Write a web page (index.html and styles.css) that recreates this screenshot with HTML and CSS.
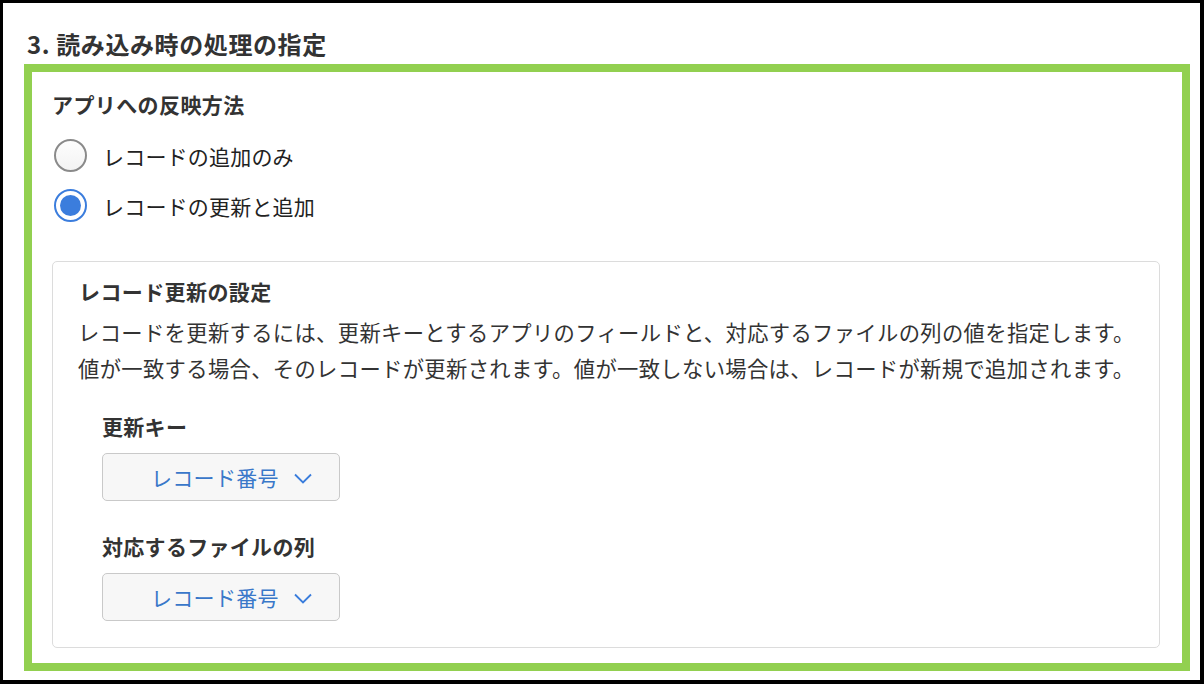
FILE: index.html
```html
<!DOCTYPE html>
<html lang="ja">
<head>
<meta charset="utf-8">
<link rel="stylesheet" href="styles.css">
</head>
<body>
<div class="frame">
  <h1 class="section-title">3. 読み込み時の処理の指定</h1>
  <div class="highlight">
    <h2 class="group-title">アプリへの反映方法</h2>
    <div class="radio-list">
      <label class="radio-row"><span class="radio"></span><span class="radio-label">レコードの追加のみ</span></label>
      <label class="radio-row"><span class="radio checked"></span><span class="radio-label">レコードの更新と追加</span></label>
    </div>
    <div class="panel">
      <h3 class="panel-title">レコード更新の設定</h3>
      <p class="panel-text">レコードを更新するには、更新キーとするアプリのフィールドと、対応するファイルの列の値を指定します。<br>値が一致する場合、そのレコードが更新されます。値が一致しない場合は、レコードが新規で追加されます。</p>
      <div class="field first">
        <div class="field-label">更新キー</div>
        <div class="select"><span class="select-text">レコード番号</span><svg class="chev" width="18" height="11" viewBox="0 0 18 11"><polyline points="1,1.5 9,9.5 17,1.5" fill="none" stroke="#3a7ddc" stroke-width="1.8"/></svg></div>
      </div>
      <div class="field second">
        <div class="field-label">対応するファイルの列</div>
        <div class="select"><span class="select-text">レコード番号</span><svg class="chev" width="18" height="11" viewBox="0 0 18 11"><polyline points="1,1.5 9,9.5 17,1.5" fill="none" stroke="#3a7ddc" stroke-width="1.8"/></svg></div>
      </div>
    </div>
  </div>
</div>
</body>
</html>
```

FILE: styles.css
```css
* { box-sizing: border-box; }
html, body { margin: 0; padding: 0; background: #fff; }
body {
  font-family: "Noto Sans CJK JP", "Noto Sans", sans-serif;
  color: #222;
}
.frame {
  width: 1204px;
  height: 684px;
  border-style: solid;
  border-color: #000;
  border-width: 3px 4px 4px 3px;
  display: flex;
  flex-direction: column;
}
.section-title {
  margin: 25px 0 0 24px;
  font-size: 24px;
  line-height: 32px;
  font-weight: 700;
  color: #333;
  letter-spacing: 0.6px;
}
.highlight {
  margin: 4px 10px 0 21px;
  height: 607px;
  border: 8px solid #92d050;
  padding: 17px 22px 0 20px;
  display: flex;
  flex-direction: column;
}
.group-title {
  margin: 0;
  font-size: 21px;
  line-height: 30px;
  font-weight: 700;
  color: #333;
  letter-spacing: 0.4px;
}
.radio-list {
  margin-top: 11px;
  display: flex;
  flex-direction: column;
}
.radio-row {
  height: 50px;
  display: flex;
  align-items: center;
  gap: 16px;
  padding-left: 2px;
}
.radio {
  width: 33px;
  height: 33px;
  border-radius: 50%;
  border: 2px solid #8a8a8a;
  background: linear-gradient(#fdfdfd, #f3f3f3);
  display: flex;
  align-items: center;
  justify-content: center;
  flex: none;
}
.radio.checked {
  border-color: #3b7ddd;
  background: #fff;
}
.radio.checked::after {
  content: "";
  width: 21px;
  height: 21px;
  border-radius: 50%;
  background: #3b7ddd;
}
.radio-label {
  font-size: 21px;
  line-height: 30px;
  padding-top: 1px;
  color: #222;
  letter-spacing: 0.2px;
}
.panel {
  margin-top: 31px;
  border: 1px solid #dcdcdc;
  border-radius: 5px;
  padding: 14px 25px 26px 25px;
  display: flex;
  flex-direction: column;
}
.panel-title {
  margin: 0 0 0 1px;
  font-size: 21px;
  line-height: 30px;
  font-weight: 700;
  color: #333;
  letter-spacing: 0.4px;
}
.panel-text {
  margin: 8px 0 0 0;
  font-size: 21.3px;
  line-height: 36px;
  color: #333;
  white-space: nowrap;
  letter-spacing: 0.35px;
}
.field {
  padding-left: 24px;
  display: flex;
  flex-direction: column;
  align-items: flex-start;
}
.field.first { margin-top: 25px; }
.field.second { margin-top: 30px; }
.field-label {
  font-size: 21px;
  line-height: 30px;
  font-weight: 700;
  color: #333;
  margin-bottom: 12px;
  letter-spacing: 0.3px;
}
.select {
  width: 238px;
  height: 48px;
  border: 1.5px solid #c9c9c9;
  border-radius: 5px;
  background: #f7f7f7;
  display: flex;
  align-items: center;
  padding-left: 48px;
  gap: 15px;
}
.select-text {
  font-size: 21px;
  line-height: 30px;
  color: #3a78c9;
  letter-spacing: 0.3px;
}
.chev { flex: none; margin-top: 2px; }
```
